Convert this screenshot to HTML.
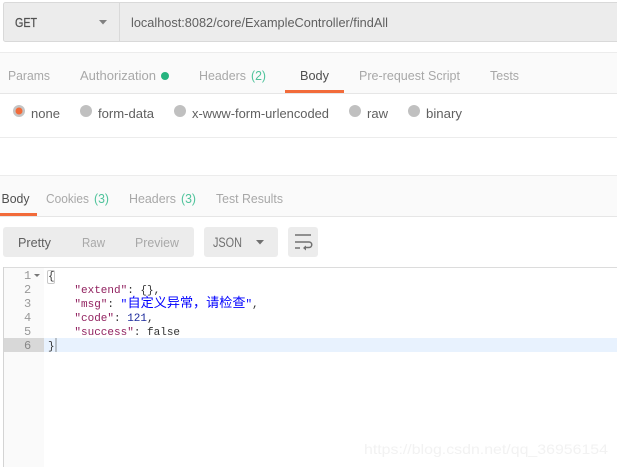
<!DOCTYPE html>
<html><head><meta charset="utf-8"><style>
html,body{margin:0;padding:0;background:#fff;width:617px;height:467px;overflow:hidden}
svg{display:block}
.s{font-family:"Liberation Sans",sans-serif;font-size:12.5px}
.m{font-family:"Liberation Mono",monospace;font-size:11px}
.c{font-family:"Liberation Mono","Noto Sans CJK SC",monospace;font-size:13px}
</style></head><body>
<svg width="617" height="467" viewBox="0 0 617 467" xmlns="http://www.w3.org/2000/svg">
<rect width="617" height="467" fill="#fff"/>
<rect x="3.5" y="2.5" width="620" height="39" rx="2" fill="#ececec" stroke="#d9d9d9"/>
<rect x="119" y="3" width="1" height="38" fill="#d9d9d9"/>
<text class="s" x="15" y="27" fill="#505050" stroke="#505050" stroke-width="0.25" textLength="22" lengthAdjust="spacingAndGlyphs">GET</text>
<path d="M99 20h8l-4 4.500z" fill="#808080"/>
<text class="s" x="131" y="27" fill="#606060" textLength="257" lengthAdjust="spacingAndGlyphs">localhost:8082/core/ExampleController/findAll</text>

<rect x="0" y="52" width="617" height="41" fill="#fafafa"/>
<rect x="0" y="52" width="617" height="1" fill="#ececec"/>
<rect x="0" y="93" width="617" height="1" fill="#e6e6e6"/>
<text class="s" x="8" y="80" fill="#a8a8a8" textLength="42" lengthAdjust="spacingAndGlyphs">Params</text>
<text class="s" x="80" y="80" fill="#a8a8a8" textLength="76" lengthAdjust="spacingAndGlyphs">Authorization</text>
<circle cx="165" cy="76" r="4" fill="#26b47f"/>
<text class="s" x="199" y="80" fill="#a8a8a8" textLength="47" lengthAdjust="spacingAndGlyphs">Headers</text>
<text class="s" x="251" y="80" fill="#4fc39b" textLength="15" lengthAdjust="spacingAndGlyphs">(2)</text>
<text class="s" x="300" y="80" fill="#505050" textLength="29" lengthAdjust="spacingAndGlyphs">Body</text>
<rect x="285" y="90" width="59" height="3" fill="#f26b3a"/>
<text class="s" x="359" y="80" fill="#a8a8a8" textLength="101" lengthAdjust="spacingAndGlyphs">Pre-request Script</text>
<text class="s" x="490" y="80" fill="#a8a8a8" textLength="29" lengthAdjust="spacingAndGlyphs">Tests</text>

<circle cx="19" cy="111" r="6" fill="#c4c4c4"/>
<circle cx="19" cy="111" r="3.500" fill="#f26b3a"/>
<text class="s" x="31" y="118" fill="#606060" textLength="29" lengthAdjust="spacingAndGlyphs">none</text>
<circle cx="86" cy="111" r="6" fill="#c0c0c0"/>
<text class="s" x="98" y="118" fill="#606060" textLength="56" lengthAdjust="spacingAndGlyphs">form-data</text>
<circle cx="180" cy="111" r="6" fill="#c0c0c0"/>
<text class="s" x="192" y="118" fill="#606060" textLength="137" lengthAdjust="spacingAndGlyphs">x-www-form-urlencoded</text>
<circle cx="355" cy="111" r="6" fill="#c0c0c0"/>
<text class="s" x="367" y="118" fill="#606060" textLength="21" lengthAdjust="spacingAndGlyphs">raw</text>
<circle cx="414" cy="111" r="6" fill="#c0c0c0"/>
<text class="s" x="426" y="118" fill="#606060" textLength="36" lengthAdjust="spacingAndGlyphs">binary</text>
<rect x="0" y="137" width="617" height="1" fill="#ececec"/>

<rect x="0" y="175" width="617" height="41" fill="#fafafa"/>
<rect x="0" y="175" width="617" height="1" fill="#ececec"/>
<rect x="0" y="216" width="617" height="1" fill="#e6e6e6"/>
<text class="s" x="1.500" y="203" fill="#505050" textLength="28" lengthAdjust="spacingAndGlyphs">Body</text>
<rect x="0" y="213" width="37" height="3" fill="#f26b3a"/>
<text class="s" x="46" y="203" fill="#a8a8a8" textLength="43" lengthAdjust="spacingAndGlyphs">Cookies</text>
<text class="s" x="94" y="203" fill="#4fc39b" textLength="15" lengthAdjust="spacingAndGlyphs">(3)</text>
<text class="s" x="129" y="203" fill="#a8a8a8" textLength="47" lengthAdjust="spacingAndGlyphs">Headers</text>
<text class="s" x="181" y="203" fill="#4fc39b" textLength="15" lengthAdjust="spacingAndGlyphs">(3)</text>
<text class="s" x="216" y="203" fill="#a8a8a8" textLength="67" lengthAdjust="spacingAndGlyphs">Test Results</text>

<rect x="3" y="227" width="191" height="30" rx="3" fill="#ececec"/>
<text class="s" x="18" y="247" fill="#606060" textLength="33" lengthAdjust="spacingAndGlyphs">Pretty</text>
<text class="s" x="82" y="247" fill="#a8a8a8" textLength="23" lengthAdjust="spacingAndGlyphs">Raw</text>
<text class="s" x="135" y="247" fill="#a8a8a8" textLength="44" lengthAdjust="spacingAndGlyphs">Preview</text>
<rect x="204" y="227" width="74" height="30" rx="3" fill="#ececec"/>
<text x="213" y="247" font-family="Liberation Sans,sans-serif" font-size="13.5" fill="#707070" textLength="29" lengthAdjust="spacingAndGlyphs">JSON</text>
<path d="M256 240h8l-4 4.500z" fill="#707070"/>
<rect x="288" y="227" width="30" height="30" rx="3" fill="#ececec"/>
<path d="M295 235h16M295 242h14a2.500 2.500 0 0 1 0 5.500h-5M295 248h5" fill="none" stroke="#707070" stroke-width="1.500"/>
<path d="M306 245.500l-3 2.500 3 2.500z" fill="#707070"/>

<rect x="3" y="267" width="614" height="1" fill="#dcdcdc"/>
<rect x="3" y="267" width="1" height="200" fill="#d4d4d4"/>
<rect x="4" y="268" width="40" height="199" fill="#fafafa"/>
<rect x="44" y="338" width="573" height="14" fill="#e8f2fe"/>
<rect x="4" y="338" width="40" height="14" fill="#d8d8d8"/>

<g font-family="Liberation Mono,monospace" font-size="12" fill="#999">
<text x="24" y="279">1</text><text x="24" y="293">2</text><text x="24" y="307">3</text><text x="24" y="321">4</text><text x="24" y="335">5</text><text x="24" y="349" fill="#888">6</text>
</g>
<path d="M34 274h6l-3 3z" fill="#777"/>
<rect x="47.500" y="270.500" width="7" height="13" rx="1.500" fill="none" stroke="#c8c8c8"/>
<rect x="55" y="338" width="2" height="14" fill="#b8c0c8"/>

<g class="m" fill="#333">
<text x="48" y="279">{</text>
<text x="74.400" y="293"><tspan fill="#91215f">"extend"</tspan>: {},</text>
<text x="74.400" y="307"><tspan fill="#91215f">"msg"</tspan>: </text>
<text x="120.600" y="307" fill="#0000ff">"</text>
<text class="c" x="127.500" y="307" fill="#0000ff" textLength="118" lengthAdjust="spacingAndGlyphs">自定义异常，请检查</text>
<text x="245.500" y="307" fill="#0000ff">"</text>
<text x="252" y="307">,</text>
<text x="74.400" y="321"><tspan fill="#91215f">"code"</tspan>: <tspan fill="#1c2a9c">121</tspan>,</text>
<text x="74.400" y="335"><tspan fill="#91215f">"success"</tspan>: false</text>
<text x="48" y="349">}</text>
</g>

<text x="364" y="454" font-family="Liberation Sans,sans-serif" font-size="14" fill="#f2f2f2" textLength="244" lengthAdjust="spacingAndGlyphs">https://blog.csdn.net/qq_36956154</text>
</svg>
</body></html>
